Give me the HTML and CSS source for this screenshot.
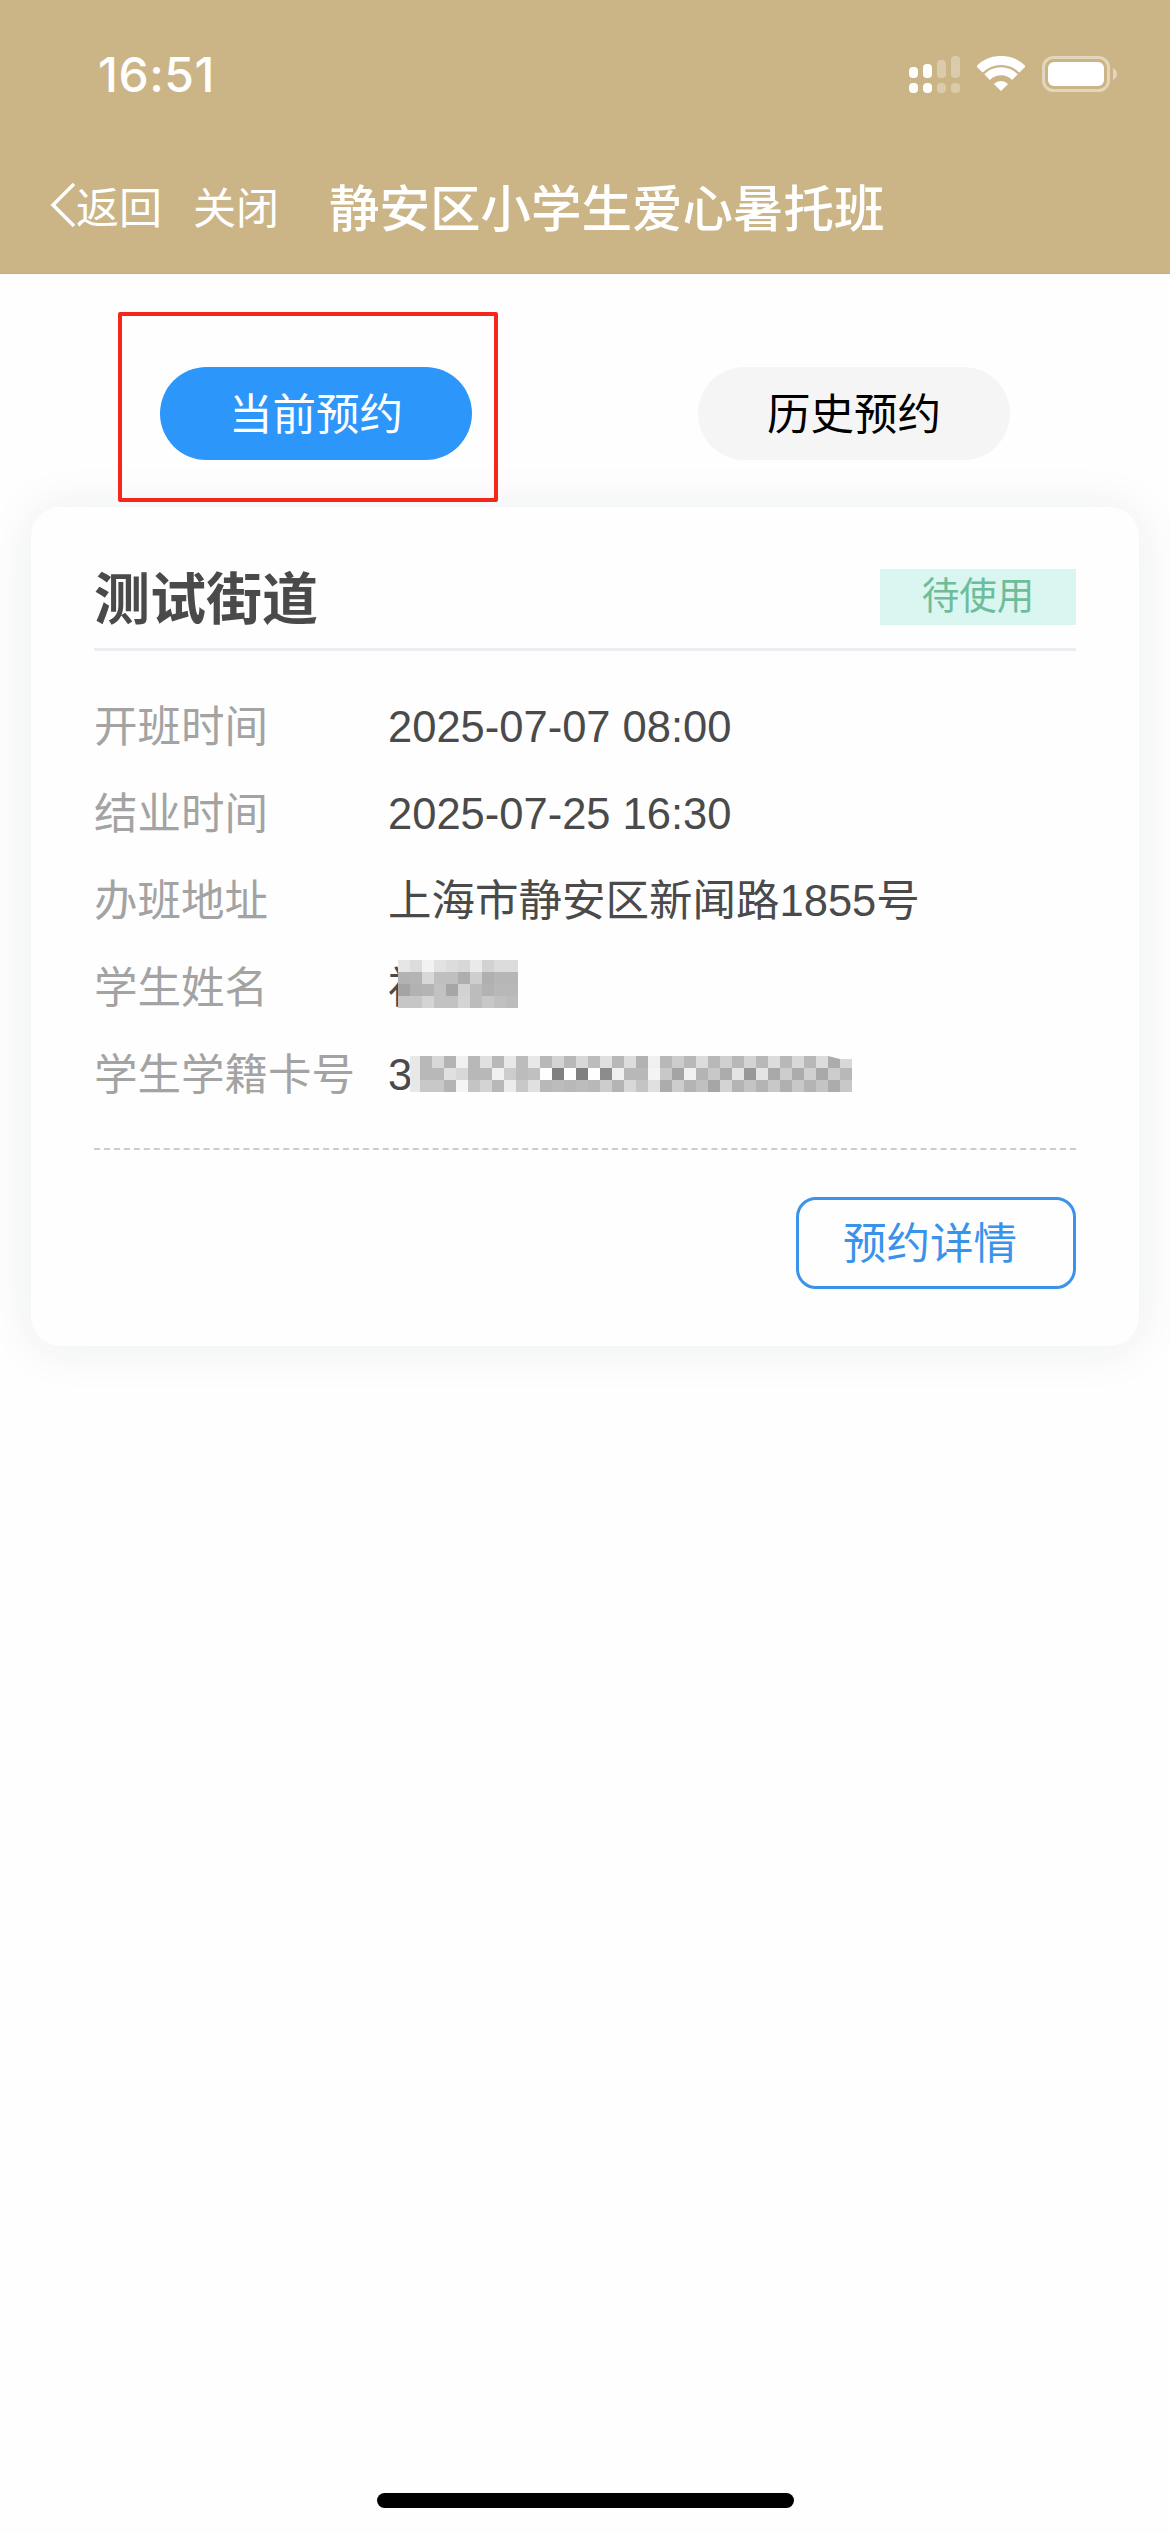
FILE: index.html
```html
<!DOCTYPE html>
<html lang="zh-CN">
<head>
  <meta charset="UTF-8">
  <title>静安区小学生爱心暑托班</title>
  <link rel="stylesheet" href="styles.css">
</head>
<body>
  <div class="page">
    <header class="header">
      <div class="status-bar">
        <span class="time">16:51</span>
        <div class="status-icons">
          <svg class="signal" width="51" height="37" viewBox="0 0 51 37" fill="#fff">
            <rect x="0" y="11" width="9" height="11" rx="4"/>
            <rect x="14" y="8" width="9" height="14" rx="4"/>
            <rect x="28" y="4" width="9" height="18" rx="4" opacity=".3"/>
            <rect x="42" y="0" width="9" height="22" rx="4" opacity=".3"/>
            <rect x="0" y="27" width="9" height="10" rx="4"/>
            <rect x="14" y="27" width="9" height="10" rx="4"/>
            <rect x="28" y="27" width="9" height="10" rx="4" opacity=".3"/>
            <rect x="42" y="27" width="9" height="10" rx="4" opacity=".3"/>
          </svg>
          <svg class="wifi" width="48" height="35" viewBox="0 0 48 35" fill="none" stroke="#fff">
            <path d="M2.4 13.4A30.5 30.5 0 0 1 45.6 13.4" stroke-width="9"/>
            <path d="M10.1 21.1A19.7 19.7 0 0 1 37.9 21.1" stroke-width="8"/>
            <path d="M24 35L16.9 27.9A10 10 0 0 1 31.1 27.9Z" fill="#fff" stroke="none"/>
          </svg>
          <svg class="battery" width="75" height="36" viewBox="0 0 75 36" fill="#fff">
            <rect x="1.5" y="1.5" width="65" height="33" rx="10" fill="none" stroke="#fff" stroke-width="3" opacity=".45"/>
            <rect x="6" y="6" width="56" height="24" rx="6"/>
            <path d="M71 12c2.500 1 4 3.500 4 6s-1.500 5-4 6z" opacity=".45"/>
          </svg>
        </div>
      </div>
      <nav class="nav">
        <a class="nav-back">
          <svg width="26" height="44" viewBox="0 0 26 44" fill="none" stroke="#fff" stroke-width="3.500">
            <path d="M24 1L3 22L24 43"/>
          </svg>
          <span>返回</span>
        </a>
        <a class="nav-close">关闭</a>
        <h1 class="nav-title">静安区小学生爱心暑托班</h1>
      </nav>
    </header>

    <div class="tabs">
      <button class="tab tab-active">当前预约</button>
      <button class="tab">历史预约</button>
      <div class="highlight"></div>
    </div>

    <section class="card">
      <div class="card-head">
        <h2 class="card-title">测试街道</h2>
        <span class="badge">待使用</span>
      </div>
      <div class="rows">
        <div class="row"><span class="label">开班时间</span><span class="value">2025-07-07 08:00</span></div>
        <div class="row"><span class="label">结业时间</span><span class="value">2025-07-25 16:30</span></div>
        <div class="row"><span class="label">办班地址</span><span class="value">上海市静安区新闻路1855号</span></div>
        <div class="row">
          <span class="label">学生姓名</span>
          <span class="value">褚<span class="mosaic mosaic-name" data-cells="e6dcf2e2dcd8ead2dcdc b2b4d8bfbfaeceb0b6b6 a4b2b4c2a6d2bcb2b8b8 c6c6d4c2c2d4bcc8c0bc"></span></span>
        </div>
        <div class="row">
          <span class="label">学生学籍卡号</span>
          <span class="value">3<span class="mosaic mosaic-card" data-cells="e8b8d8b4f0b8e0b8e8bce8b8d4b8d8bce0b8ddb2f0b8ccb8dcb8d0b8d4b8dcb8d8b8dcacd8 e8b8b8e0d8b8b8f0ccbcc0fe80fe80fe8cf0b8b8f4c8a4f0b4c8ace498e4a8ccacd0a8ccb8 e8c8c8b4f4c4d4b8ecc8e0b8bcb8bcb8ccb4d8c4e0accc b4c0a6d4b4c4b4c8b0c8b4c4acc8"></span></span>
        </div>
      </div>
      <div class="card-foot">
        <button class="detail-btn">预约详情</button>
      </div>
    </section>

    <div class="home-bar"></div>
  </div>

  <script src="script.js"></script>
</body>
</html>
```

FILE: styles.css
```css
* {
  box-sizing: border-box;
}
body {
  margin: 0;
  background: #fefefe;
  font-family: "Liberation Sans", "Noto Sans CJK SC", sans-serif;
}
.page {
  position: relative;
  height: 2532px;
  overflow: hidden;
}
.header {
  height: 274px;
  background: #cbb586;
  border-bottom: 1px solid #b9ae97;
  color: white;
}
.status-bar {
  height: 150px;
  padding: 49px 53px 0 98px;
  display: flex;
  justify-content: space-between;
  align-items: flex-start;
}
.time {
  font-family: Inter, sans-serif;
  font-size: 48px;
  font-weight: 500;
  line-height: 52px;
  letter-spacing: 0.5px;
}
.status-icons {
  display: flex;
  align-items: flex-start;
  gap: 17px;
  padding-top: 7px;
}
.nav {
  height: 116px;
  padding: 0 0 6px 50px;
  display: flex;
  align-items: center;
}
.nav-back {
  display: flex;
  align-items: center;
  font-size: 43px;
}
.nav-close {
  margin-left: 31px;
  font-size: 43px;
}
.nav-title {
  margin: 0 0 0 50px;
  font-size: 50.500px;
  font-weight: 500;
}
.tabs {
  position: relative;
  padding-top: 93px;
  display: flex;
  justify-content: center;
  gap: 226px;
}
.tab {
  width: 312px;
  height: 93px;
  padding: 0 0 5px;
  border: none;
  border-radius: 47px;
  background: #f5f5f5;
  color: black;
  font-family: inherit;
  font-size: 43.500px;
}
.tab-active {
  background: #2d96fb;
  color: white;
}
.highlight {
  position: absolute;
  left: 118px;
  top: 38px;
  width: 380px;
  height: 190px;
  border: 4px solid #f5261c;
  border-radius: 2px;
}
.card {
  margin: 47px 31px 0;
  padding: 62px 63px 57px;
  background: #fefefe;
  border-radius: 30px;
  box-shadow: 0 2px 50px rgba(30, 40, 70, 0.08);
}
.card-head {
  display: flex;
  justify-content: space-between;
  align-items: flex-start;
  height: 82px;
  border-bottom: 3px solid #ebedf2;
}
.card-title {
  margin: 0;
  font-size: 56px;
  line-height: 62px;
  font-weight: bold;
  color: #4a4a4a;
}
.badge {
  width: 196px;
  height: 56px;
  background: #d9f6f0;
  color: #6fbc9a;
  font-size: 37.500px;
  line-height: 54px;
  text-align: center;
}
.rows {
  padding: 33px 0 29px;
  border-bottom: 2px dashed #cccccc;
}
.row {
  display: flex;
  height: 87px;
  line-height: 87px;
  font-size: 43.500px;
}
.label {
  width: 294px;
  color: #a3a3a3;
}
.value {
  position: relative;
  color: #4a4a4a;
}
.mosaic {
  position: absolute;
  display: grid;
  grid-auto-rows: 12px;
}
.mosaic-name {
  left: 10px;
  top: 15px;
  grid-template-columns: repeat(10, 12px);
}
.mosaic-card {
  left: 22px;
  top: 24px;
  grid-template-columns: 10px repeat(36, 12px);
  clip-path: polygon(0 0, 418px 0, 430px 3px, 442px 3px, 442px 36px, 0 36px);
}
.card-foot {
  padding-top: 47px;
  display: flex;
  justify-content: flex-end;
}
.detail-btn {
  width: 280px;
  height: 92px;
  padding: 0 12px 5px 0;
  background: #fefefe;
  border: 3px solid #3a93ea;
  border-radius: 20px;
  color: #3a93ea;
  font-family: inherit;
  font-size: 43.500px;
}
.home-bar {
  position: absolute;
  left: 377px;
  bottom: 24px;
  width: 417px;
  height: 15px;
  background: black;
  border-radius: 8px;
}
```

FILE: script.js
```js
// pixelated cover over the blurred out student data
document.querySelectorAll(".mosaic").forEach(function (box) {
  const hex = box.dataset.cells.replace(/\s/g, "");
  for (let i = 0; i < hex.length; i += 2) {
    const v = hex.slice(i, i + 2);
    const cell = document.createElement("div");
    cell.style.background = "#" + v + v + v;
    box.appendChild(cell);
  }
});
```
